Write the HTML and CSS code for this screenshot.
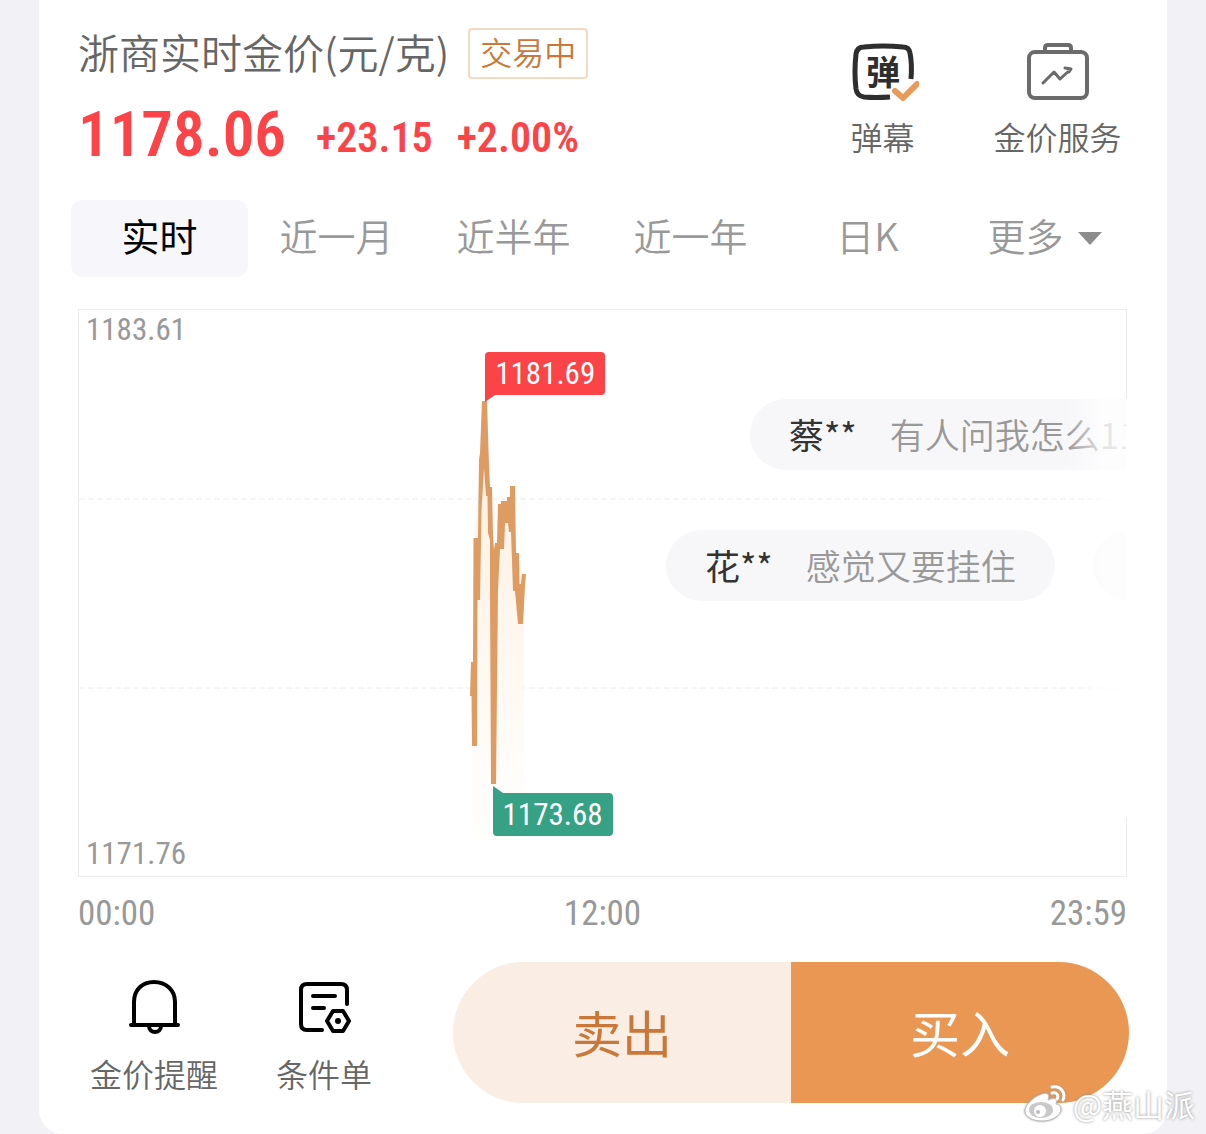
FILE: index.html
```html
<!DOCTYPE html>
<html lang="zh-CN">
<head>
<meta charset="utf-8">
<meta name="viewport" content="width=device-width, initial-scale=1">
<title>浙商实时金价</title>
<link rel="stylesheet" href="styles.css">
</head>
<body>
<main class="card">
  <header class="header">
    <div class="quote">
      <div class="title-row">
        <h1 class="title">浙商实时金价(元/克)</h1>
        <span class="status">交易中</span>
      </div>
      <div class="price-row">
        <strong class="price">1178.06</strong>
        <span class="change">+23.15</span>
        <span class="change">+2.00%</span>
      </div>
    </div>
    <div class="tools">
      <button class="tool" type="button">
        <svg class="tool-icon" viewBox="0 0 72 64" aria-hidden="true">
          <path d="M64 38C65 26 64 17 63 12Q62 6 56 6Q36 4 17 6Q10 6 9 13Q7 31 9 48Q10 55 17 56Q28 57 43 56" fill="none" stroke="#2e2e2e" stroke-width="5"/>
          <text class="icon-glyph" x="36" y="44" text-anchor="middle">弹</text>
          <path d="M48 50L56 57L70 43" fill="none" stroke="#e89a5b" stroke-width="6" stroke-linecap="round" stroke-linejoin="round"/>
        </svg>
        <span>弹幕</span>
      </button>
      <button class="tool" type="button">
        <svg class="tool-icon" viewBox="0 0 72 64" aria-hidden="true">
          <g fill="none" stroke="#6b6b6b" stroke-width="4" stroke-linecap="round" stroke-linejoin="round">
            <rect x="7" y="11" width="58" height="46" rx="6"/>
            <path d="M23 10V7Q23 4 26 4H46Q49 4 49 7V10"/>
            <path d="M21 42L32 31L38 38L49 28M43 27L49 28L47 31" stroke-width="3"/>
          </g>
        </svg>
        <span>金价服务</span>
      </button>
    </div>
  </header>

  <nav class="tabs">
    <button class="tab tab-active" type="button">实时</button>
    <button class="tab" type="button">近一月</button>
    <button class="tab" type="button">近半年</button>
    <button class="tab" type="button">近一年</button>
    <button class="tab" type="button">日K</button>
    <button class="tab" type="button">更多<span class="caret"></span></button>
  </nav>

  <section class="chart">
    <div class="plot">
      <svg class="plot-svg" viewBox="0 0 1047 566" aria-hidden="true">
        <defs>
          <linearGradient id="area" x1="0" y1="0" x2="0" y2="1">
            <stop offset="0" stop-color="#fbeee0"/>
            <stop offset="0.5" stop-color="#fef7f0"/>
            <stop offset="1" stop-color="#ffffff"/>
          </linearGradient>
        </defs>
        <path d="M0 189H1047M0 378H1047" fill="none" stroke="#ececec" stroke-width="1" stroke-dasharray="6 3"/>
        <path d="M393 546V384L396 228L402 150L406 91L411 180L415 300L418 235L422 200L433 180L437 245L445 268V546Z" fill="url(#area)"/>
        <path class="price-band" d="M393 436L392.500 386H391L392 352H394L394.500 228H399L400 150L401 143L403 91H408L410 155L411 177H413L414 225L415 240L416 233H418L419 194H422V191H428V187H431V176H436L437 243H440L440.500 274H442L443 264H447L446 276L444 314H439L436 281H434L432 222H430L429 213H426L425 239H421L419 280L417 474H412L411 280V230L409 223L408.500 186H407L405 158L402.500 200L401 290H398.500L398 436Z"/>
      </svg>
      <span class="bound bound-max">1183.61</span>
      <span class="bound bound-min">1171.76</span>
      <span class="tag tag-high">1181.69</span>
      <span class="tag tag-low">1173.68</span>
      <div class="danmu">
        <p class="bubble bubble-a"><b>蔡**</b><span>有人问我怎么11</span></p>
        <p class="bubble bubble-b"><b>花**</b><span>感觉又要挂住</span></p>
        <p class="bubble bubble-c"></p>
      </div>
    </div>
    <div class="axis"><span>00:00</span><span>12:00</span><span>23:59</span></div>
  </section>

  <footer class="footer">
    <button class="action" type="button">
      <svg class="action-icon" viewBox="0 0 60 60" aria-hidden="true">
        <g fill="none" stroke="#000" stroke-width="4" stroke-linecap="round">
          <path d="M10 47V26C10 14 18 6 30 6S51 14 51 26V47"/>
          <path d="M7 49H54M25 50C25 58 37 58 37 50"/>
        </g>
      </svg>
      <span>金价提醒</span>
    </button>
    <button class="action" type="button">
      <svg class="action-icon" viewBox="0 0 60 60" aria-hidden="true">
        <g fill="none" stroke="#000" stroke-width="4" stroke-linecap="round" stroke-linejoin="round">
          <path d="M53 28V14Q53 8 47 8H13Q7 8 7 14V48Q7 54 13 54H28"/>
          <path d="M19 20H41M19 32H30"/>
          <path d="M39 35H49L55 45L49 55H39L33 45Z"/>
        </g>
        <circle cx="44" cy="45" r="3"/>
      </svg>
      <span>条件单</span>
    </button>
    <div class="trade">
      <button class="sell" type="button">卖出</button>
      <button class="buy" type="button">买入</button>
    </div>
  </footer>
</main>
<div class="watermark">
  <svg class="weibo" viewBox="0 0 44 40" aria-hidden="true">
    <path d="M18 10C9 13 1 21 1 27C1 33 9 37 18 37C29 37 37 31 37 25C37 22 34 20 32 20C34 15 30 13 24 16C26 11 24 8 18 10Z" fill="#fff" stroke="#bbb" stroke-width="1"/>
    <ellipse cx="17" cy="26" rx="12" ry="8" fill="#c9c9c9"/>
    <circle cx="16" cy="27" r="6" fill="#fff"/>
    <circle cx="14" cy="28" r="2" fill="#bbb"/>
    <path d="M28 3C37 1 42 9 39 16M28 9C33 8 35 11 33 15" fill="none" stroke="#fff" stroke-width="3" stroke-linecap="round"/>
  </svg>
  <span>@燕山派</span>
</div>
</body>
</html>
```
FILE: styles.css
```css
* { box-sizing: border-box; }

body {
  position: relative;
  margin: 0;
  min-height: 100vh;
  background: #f2f1f6;
  color: #666;
  font-family: "Noto Sans CJK SC", sans-serif;
  font-weight: 350;
}

button {
  margin: 0;
  padding: 0;
  border: 0;
  background: none;
  color: inherit;
  font: inherit;
  cursor: pointer;
}

.card {
  margin: 0 39px;
  padding: 24px 38px 31px 32px;
  border-radius: 0 0 24px 24px;
  background: #fff;
}

.header {
  display: flex;
  justify-content: space-between;
  height: 152px;
  padding-left: 7px;
}

.title-row {
  display: flex;
  align-items: center;
  gap: 19px;
  height: 58px;
}

.title {
  margin: 0;
  padding-bottom: 4px;
  font-size: 41px;
  font-weight: 350;
  line-height: 54px;
}

.status {
  padding: 0 10px 4px;
  border: 2px solid #f3d9c2;
  border-radius: 4px;
  color: #c9783a;
  font-size: 32px;
  line-height: 43px;
}

.price-row {
  display: flex;
  align-items: center;
  gap: 24px;
  padding-top: 3px;
  color: #fb4348;
  font-family: "Roboto Condensed", "Noto Sans CJK SC", sans-serif;
  font-weight: 600;
  line-height: 94px;
}

.price {
  margin-right: 6px;
  font-size: 63px;
  font-weight: 600;
}

.change {
  padding-top: 6px;
  font-size: 42px;
}

.tools {
  display: flex;
  gap: 48px;
  padding: 17px 8px 0 0;
}

.tool {
  display: flex;
  flex-direction: column;
  align-items: center;
  align-self: flex-start;
  width: 127px;
  font-size: 32px;
  line-height: 46px;
  white-space: nowrap;
}

.tool-icon {
  width: 72px;
  height: 64px;
  margin-bottom: 8px;
}

.icon-glyph {
  fill: #2e2e2e;
  font-size: 34px;
  font-weight: 700;
}

.tabs {
  display: grid;
  grid-template-columns: repeat(6, 1fr);
  margin: 24px -4px 0 0;
}

.tab {
  display: flex;
  align-items: center;
  justify-content: center;
  height: 77px;
  padding-bottom: 8px;
  border-radius: 12px;
  color: #999;
  font-size: 38px;
}

.tab-active {
  background: #f6f6fb;
  color: #000;
  font-weight: 400;
}

.caret {
  margin: 8px 0 0 14px;
  border: 12px solid transparent;
  border-top: 13px solid #8c8c8c;
  border-bottom: 0;
}

.chart { padding: 32px 2px 0 7px; }

.plot {
  position: relative;
  border: 1px solid #ececec;
}

.plot-svg {
  display: block;
  width: 100%;
  height: auto;
}

.price-band { fill: #de9b62; }

.bound,
.tag,
.axis {
  color: #999;
  font-family: "Roboto Condensed", "Noto Sans CJK SC", sans-serif;
  font-size: 31px;
  font-weight: 400;
}

.bound {
  position: absolute;
  left: 7px;
  line-height: 40px;
}

.bound-max { top: 0; }
.bound-min { bottom: 2px; }

.tag {
  position: absolute;
  width: 120px;
  border-radius: 4px;
  color: #fff;
  line-height: 43px;
  text-align: center;
}

.tag::after {
  content: "";
  position: absolute;
  left: 0;
  border-right: 10px solid transparent;
}

.tag-high {
  left: 38.8%;
  bottom: 85%;
  border-bottom-left-radius: 0;
  background: #fb4348;
}

.tag-high::after {
  top: 100%;
  border-top: 7px solid #fb4348;
}

.tag-low {
  top: 85.3%;
  left: 39.5%;
  border-top-left-radius: 0;
  background: #36a184;
}

.tag-low::after {
  bottom: 100%;
  border-bottom: 7px solid #36a184;
}

.danmu {
  position: absolute;
  top: 89px;
  right: -1px;
  width: 461px;
  height: 418px;
  overflow: hidden;
}

.danmu::after {
  content: "";
  position: absolute;
  inset: 0 0 0 auto;
  width: 60px;
  background: linear-gradient(to right, #fff0, #fffb 60%, #fffc 97%, #fff);
}

.bubble {
  position: absolute;
  display: flex;
  gap: 33px;
  height: 71px;
  margin: 0;
  padding: 0 39px;
  border-radius: 36px;
  background: #f7f7fa;
  color: #999;
  font-size: 35px;
  line-height: 69px;
  white-space: nowrap;
}

.bubble b {
  color: #333;
  font-weight: 400;
}

.bubble-a { top: 0; left: 84px; }
.bubble-b { top: 131px; left: 0; }
.bubble-c { top: 131px; left: 427px; width: 200px; }

.axis {
  display: flex;
  justify-content: space-between;
  padding-top: 14px;
  font-size: 35px;
  line-height: 46px;
}

.footer {
  display: flex;
  align-items: center;
  margin-left: -2px;
  padding-top: 25px;
}

.action {
  display: flex;
  flex-direction: column;
  align-items: center;
  width: 170px;
  padding-top: 6px;
  font-size: 32px;
  line-height: 46px;
}

.action-icon {
  width: 60px;
  height: 60px;
  margin-bottom: 14px;
}

.trade {
  display: flex;
  flex: 1;
  height: 141px;
  margin-left: 44px;
  border-radius: 71px;
  overflow: hidden;
  font-size: 50px;
}

.sell,
.buy {
  flex: 1;
  padding-bottom: 4px;
  font-weight: 400;
}

.sell {
  background: #faede3;
  color: #c9783a;
}

.buy {
  background: #ea9753;
  color: #fff;
}

.watermark {
  position: absolute;
  right: 11px;
  bottom: 7px;
  display: flex;
  align-items: center;
  gap: 5px;
  color: #fff;
  font-size: 31px;
  font-weight: 400;
  line-height: 46px;
  text-shadow: 0 0 3px #888;
}

.weibo {
  width: 44px;
  height: 40px;
  filter: drop-shadow(0 0 1px #999);
}
```
